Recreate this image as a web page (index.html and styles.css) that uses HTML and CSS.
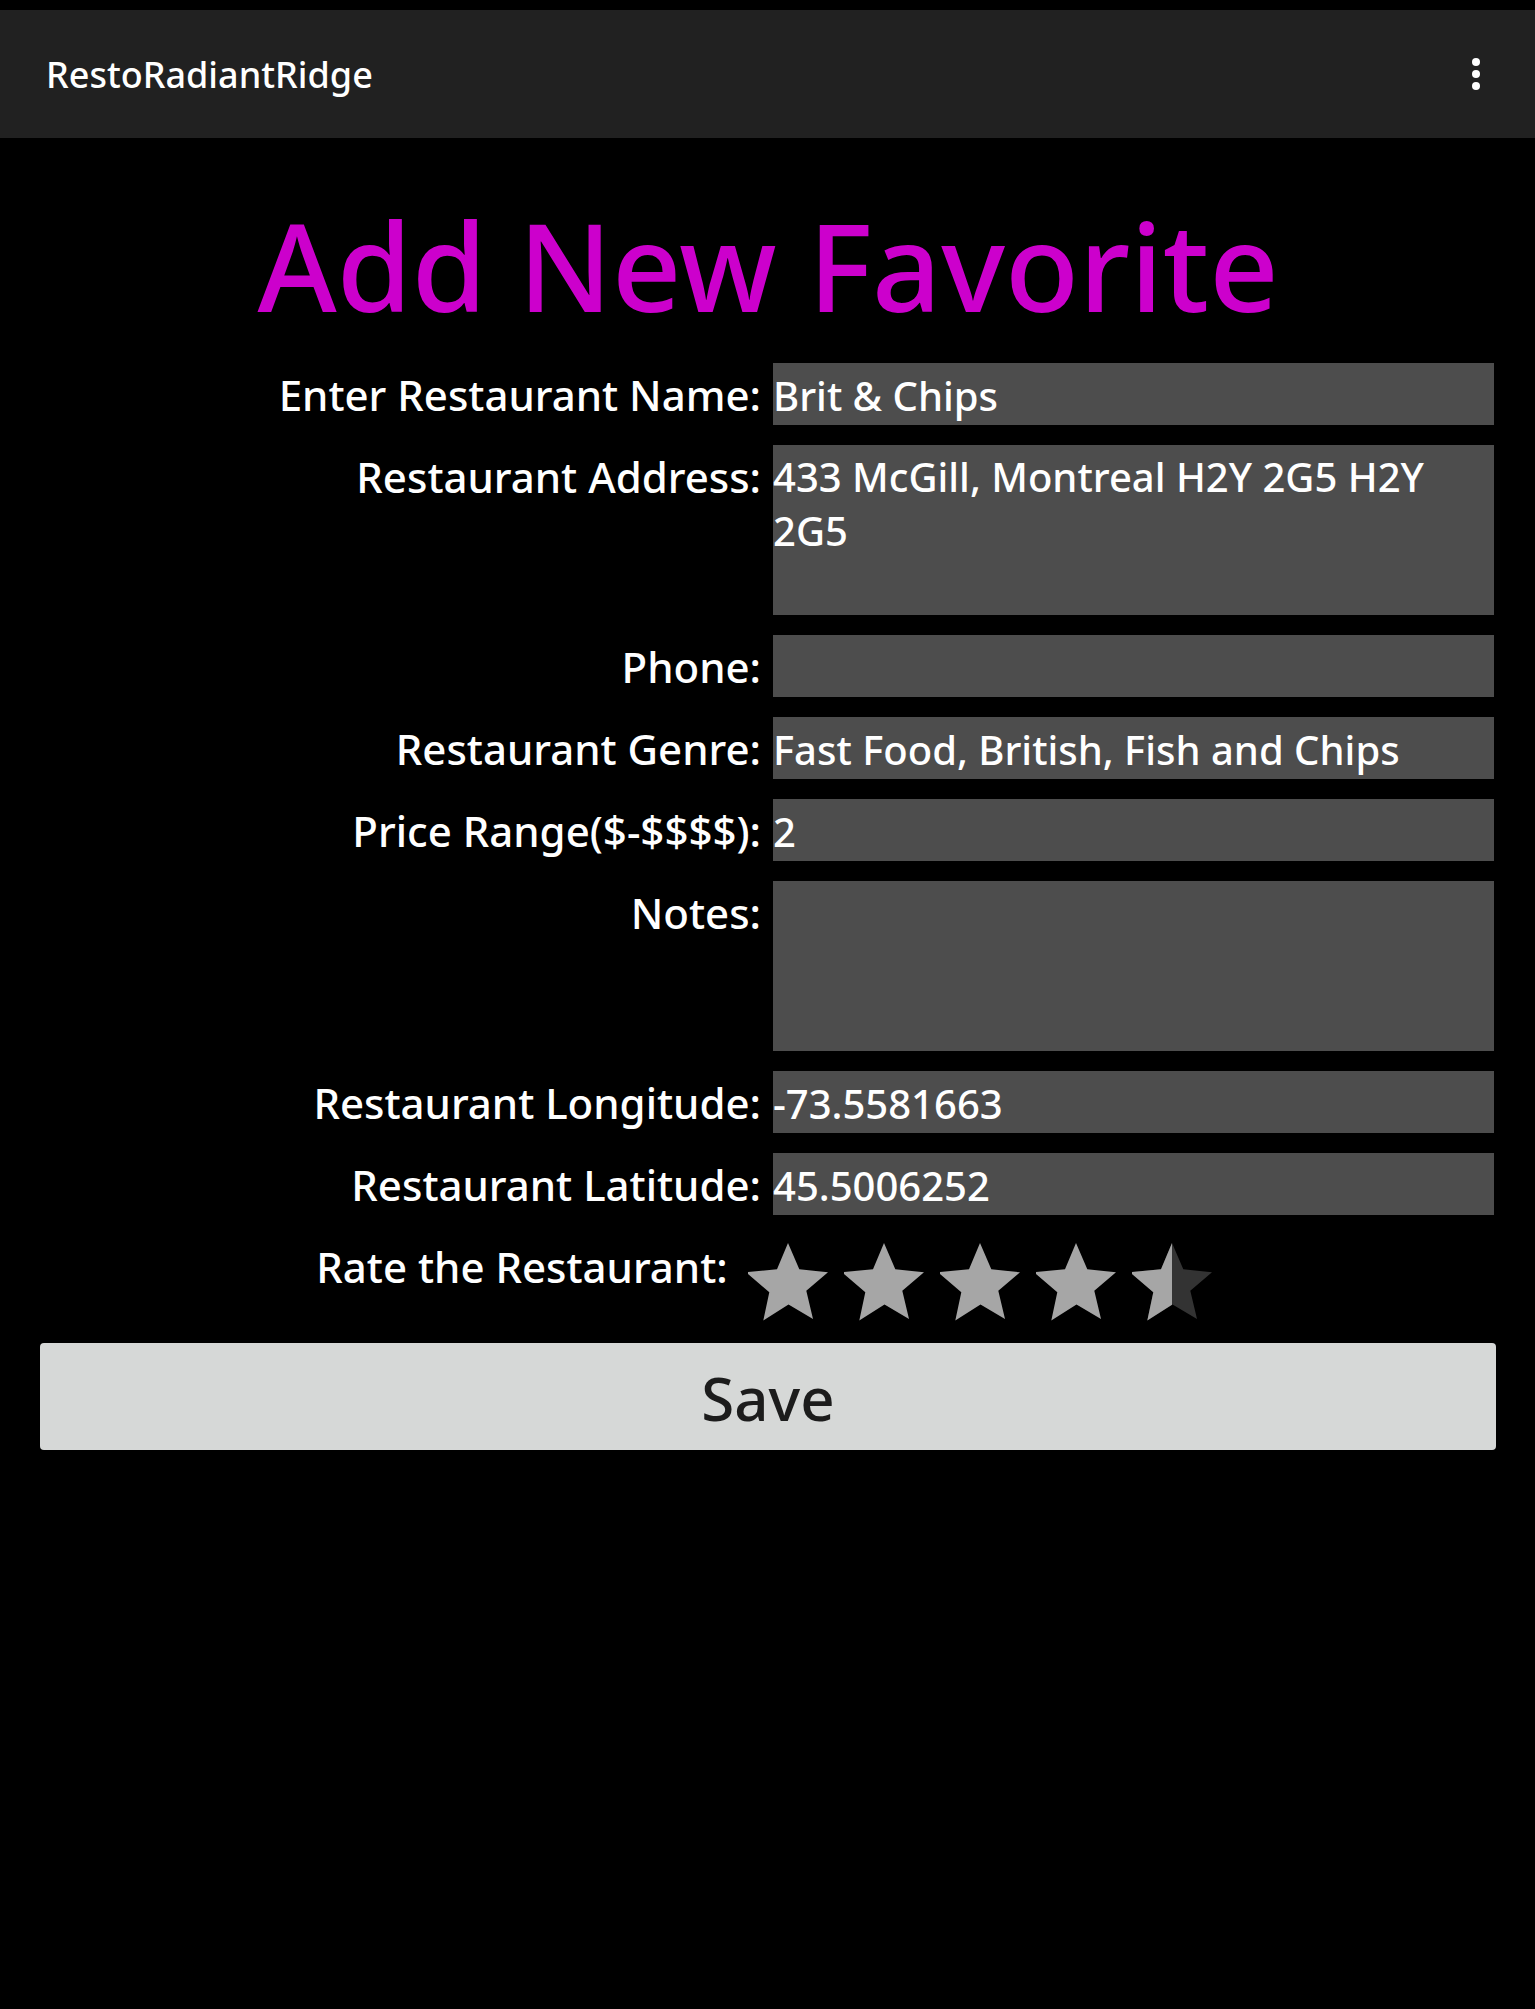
FILE: index.html
```html
<!DOCTYPE html>
<html lang="en">
<head>
<meta charset="utf-8">
<meta name="viewport" content="width=device-width, initial-scale=1">
<title>RestoRadiantRidge</title>
<link rel="stylesheet" href="styles.css">
</head>
<body>
<header class="app-bar">
  <span class="app-name">RestoRadiantRidge</span>
  <button class="menu-button" type="button" aria-label="More options">
    <svg width="8" height="32" viewBox="0 0 8 32" fill="currentColor" aria-hidden="true">
      <circle cx="4" cy="4" r="4"/><circle cx="4" cy="16" r="4"/><circle cx="4" cy="28" r="4"/>
    </svg>
  </button>
</header>
<main class="page">
  <h1 class="title">Add New Favorite</h1>
  <form class="form">
    <div class="row">
      <label class="label" for="name">Enter Restaurant Name:</label>
      <input class="field" id="name" type="text" value="Brit &amp; Chips">
    </div>
    <div class="row">
      <label class="label" for="address">Restaurant Address:</label>
      <textarea class="field" id="address" rows="3">433 McGill, Montreal H2Y 2G5 H2Y 2G5</textarea>
    </div>
    <div class="row">
      <label class="label" for="phone">Phone:</label>
      <input class="field" id="phone" type="tel">
    </div>
    <div class="row">
      <label class="label" for="genre">Restaurant Genre:</label>
      <input class="field" id="genre" type="text" value="Fast Food, British, Fish and Chips">
    </div>
    <div class="row">
      <label class="label" for="price">Price Range($-$$$$):</label>
      <input class="field" id="price" type="text" value="2">
    </div>
    <div class="row">
      <label class="label" for="notes">Notes:</label>
      <textarea class="field" id="notes" rows="3"></textarea>
    </div>
    <div class="row">
      <label class="label" for="longitude">Restaurant Longitude:</label>
      <input class="field" id="longitude" type="text" value="-73.5581663">
    </div>
    <div class="row">
      <label class="label" for="latitude">Restaurant Latitude:</label>
      <input class="field" id="latitude" type="text" value="45.5006252">
    </div>
    <div class="rating">
      <span class="label">Rate the Restaurant:</span>
      <svg class="stars" width="480" height="88" viewBox="0 0 480 88" role="img" aria-label="4.5 out of 5 stars">
        <defs>
          <path id="star" d="M48 8L59.300 34.300 88 37.300 66.300 55.700 73 84 48.500 69.500 23.300 85.600 29.300 57.300 8 39V37L37 34.300Z"/>
          <clipPath id="left"><path d="M0 0H48V88H0Z"/></clipPath>
        </defs>
        <g fill="#a6a6a6">
          <use href="#star"/>
          <use href="#star" x="96"/>
          <use href="#star" x="192"/>
          <use href="#star" x="288"/>
        </g>
        <g transform="translate(384 0)">
          <use href="#star" fill="#333"/>
          <use href="#star" fill="#a6a6a6" clip-path="url(#left)"/>
        </g>
      </svg>
    </div>
    <button class="save" type="submit">Save</button>
  </form>
</main>
</body>
</html>
```
FILE: styles.css
```css
* { box-sizing: border-box; }

body {
  margin: 0;
  min-height: 100vh;
  background: #000;
  color: #fff;
  font-family: "Noto Sans", sans-serif;
  font-weight: 500;
}

.app-bar {
  display: flex;
  align-items: center;
  justify-content: space-between;
  height: 128px;
  margin-top: 10px;
  padding: 0 39px 0 46px;
  background: #212121;
}

.app-name {
  padding-top: 2px;
  font-size: 36px;
  line-height: 48px;
}

.menu-button {
  display: flex;
  padding: 16px;
  border: 0;
  background: none;
  color: #fff;
}

.page { padding: 0 39px 0 40px; }

.title {
  margin: 0;
  padding: 43px 0 14px;
  color: #c0c;
  font-size: 121px;
  font-weight: 500;
  line-height: 168px;
  text-align: center;
}

.form {
  display: flex;
  flex-direction: column;
  gap: 20px;
}

.row {
  display: grid;
  grid-template-columns: 1fr 1fr;
  column-gap: 12px;
  align-items: start;
  padding-right: 2px;
}

.label {
  padding: 5px 0 3px;
  font-size: 42px;
  line-height: 54px;
  text-align: right;
}

.field {
  display: block;
  width: 100%;
  height: 62px;
  margin: 0;
  padding: 5px 0 3px;
  border: 0;
  border-radius: 0;
  background: #4d4d4d;
  color: #fff;
  font-family: inherit;
  font-size: 40px;
  font-weight: inherit;
  line-height: 54px;
  resize: none;
}

textarea.field {
  height: 170px;
  overflow: hidden;
}

.rating {
  display: flex;
  justify-content: center;
  align-items: flex-start;
  gap: 12px;
}

.stars { flex: none; }

.save {
  height: 107px;
  padding: 3px 0 0;
  border: 0;
  border-radius: 4px;
  background: #d6d8d7;
  color: #1c1c1c;
  font-family: inherit;
  font-size: 60px;
  font-weight: inherit;
  line-height: 80px;
}
```
